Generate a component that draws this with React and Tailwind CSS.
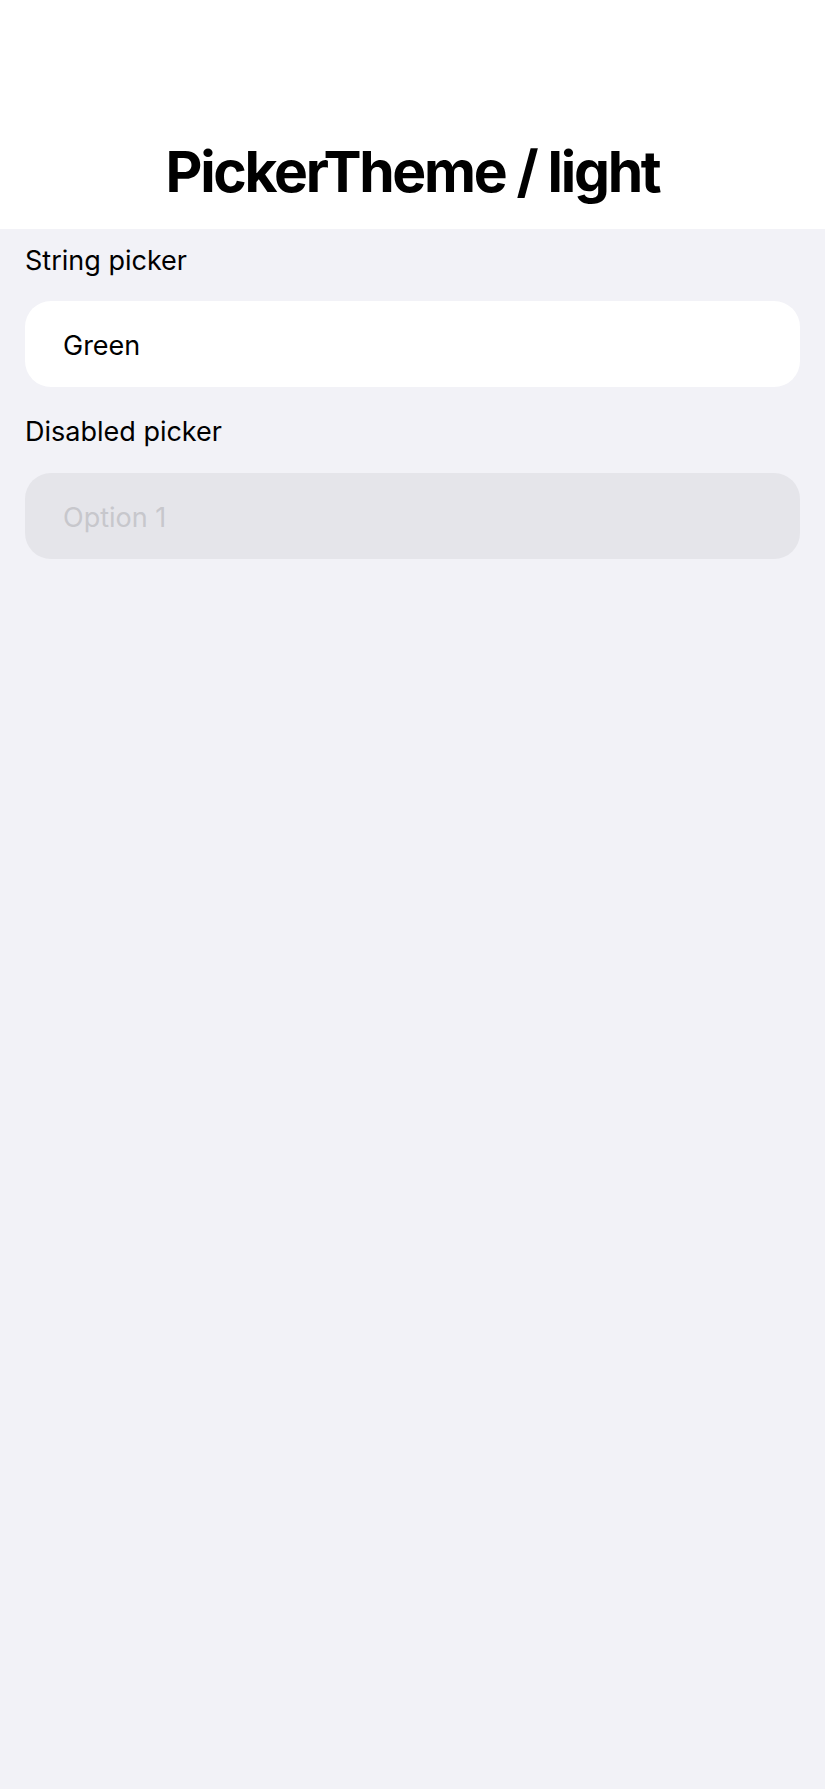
import React from 'react';

const font = { fontFamily: 'Inter, "Noto Sans", sans-serif' };

function Picker({ value, disabled }) {
  return (
    <div
      className={`h-[86px] rounded-[26px] flex items-center pl-[38px] pt-[4px] text-[27px] ${
        disabled ? 'bg-[#e5e5ea] text-[#c7c7cc]' : 'bg-white text-black'
      }`}
    >
      {value}
    </div>
  );
}

export default function App() {
  return (
    <div className="min-h-[1789px] w-full bg-[#f2f2f7] antialiased" style={font}>
      {/* Navigation header */}
      <div className="h-[229px] bg-white flex items-end justify-center pb-[22px]">
        <h1 className="text-[57px] leading-[70px] font-bold tracking-[-2.3px] text-black">
          PickerTheme / light
        </h1>
      </div>

      <div className="px-[25px] pt-[16px]">
        <div className="text-[27px] leading-[31px] text-black">String picker</div>
        <div className="mt-[25px]">
          <Picker value="Green" />
        </div>

        <div className="mt-[29px] text-[27px] leading-[31px] text-black">Disabled picker</div>
        <div className="mt-[26px]">
          <Picker value="Option 1" disabled />
        </div>
      </div>
    </div>
  );
}
